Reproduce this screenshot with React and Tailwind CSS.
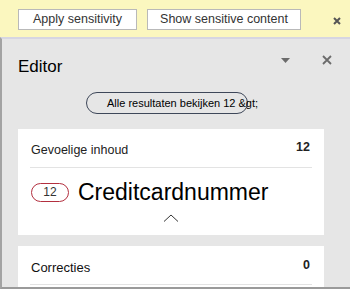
import React from "react";

export default function App() {
  const sans = { fontFamily: '"Liberation Sans", Arial, sans-serif' };
  return (
    <div className="w-[350px] h-[289px] overflow-hidden flex flex-col bg-[#e6e6e6]" style={sans}>
      {/* Yellow message bar */}
      <div className="h-[37px] shrink-0 bg-[#fbf7bf] flex items-start pt-[9px] pl-[18px] pr-[10px] relative">
        <button className="h-[21px] w-[119px] bg-white border border-[#b9b9b9] text-[12.5px] text-[#333] leading-none flex items-center justify-center">
          Apply sensitivity
        </button>
        <button className="ml-[10px] h-[21px] w-[154px] bg-white border border-[#b9b9b9] text-[12.5px] text-[#333] leading-none flex items-center justify-center">
          Show sensitive content
        </button>
        <svg className="absolute left-[333px] top-[17px]" width="8" height="8" viewBox="0 0 8 8">
          <path d="M1 1L7 7M7 1L1 7" stroke="#555" strokeWidth="2" />
        </svg>
      </div>
      {/* Panel */}
      <div className="flex-1 border-t-2 border-t-[#d6d6e2] border-l-2 border-l-[#a3a3a3] border-b-2 border-b-[#9a9a9a] bg-[#e6e6e6] pl-[16px] flex flex-col relative">
        <div className="h-[53px] flex items-center">
          <span className="text-[17px] text-black leading-none mt-[2px]">Editor</span>
        </div>
        <svg className="absolute left-[279px] top-[19px]" width="9" height="5" viewBox="0 0 9 5">
          <path d="M0 0H9L4.5 5Z" fill="#6b6b6b" />
        </svg>
        <svg className="absolute left-[320px] top-[16px]" width="10" height="10" viewBox="0 0 10 10">
          <path d="M1 1L9 9M9 1L1 9" stroke="#6b6b6b" strokeWidth="1.8" />
        </svg>
        <div className="h-[22px] w-[162px] ml-[68px] rounded-full border border-[#3e4759] flex items-center pl-[20px] whitespace-nowrap overflow-visible">
          <span className="text-[11px] text-black leading-none">Alle resultaten bekijken 12 &amp;gt;</span>
        </div>
        {/* Card 1 */}
        <div className="mt-[15px] w-[306px] h-[106px] bg-white px-[12px] flex flex-col">
          <div className="h-[39px] flex items-end justify-between border-b border-[#e3e3e3] pb-[11px] pl-[1px] pr-[2px]">
            <span className="text-[12.5px] text-[#222] leading-none">Gevoelige inhoud</span>
            <span className="text-[12.5px] font-bold text-[#222] leading-none mb-[3px]">12</span>
          </div>
          <div className="mt-[9px] h-[30px] flex items-center pl-[1px]">
            <span className="w-[38px] h-[19px] rounded-full border border-[#b3303f] text-[12px] text-[#333] flex items-center justify-center leading-none">12</span>
            <span className="ml-[9px] text-[23px] text-black leading-none">Creditcardnummer</span>
          </div>
          <div className="flex justify-center mt-[7px]">
            <svg width="16" height="8" viewBox="0 0 16 8">
              <path d="M1 7.5L8 1L15 7.5" stroke="#333" strokeWidth="1" fill="none" />
            </svg>
          </div>
        </div>
        {/* Card 2 */}
        <div className="mt-[11px] w-[306px] flex-1 bg-white px-[12px] flex flex-col">
          <div className="h-[39px] flex items-end justify-between border-b border-[#e3e3e3] pb-[10px] pl-[1px] pr-[2px]">
            <span className="text-[13px] text-[#111] leading-none">Correcties</span>
            <span className="text-[12.5px] font-bold text-[#222] leading-none mb-[3px]">0</span>
          </div>
        </div>
      </div>
    </div>
  );
}
